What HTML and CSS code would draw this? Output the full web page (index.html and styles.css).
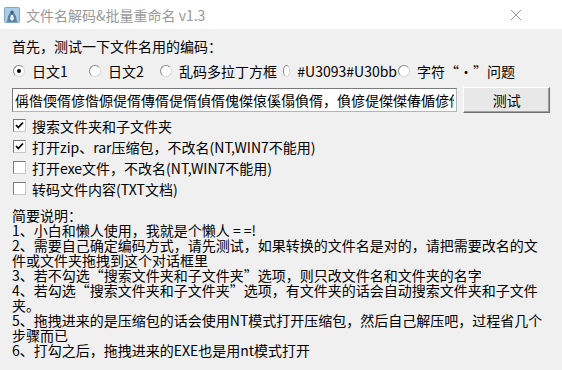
FILE: index.html
```html
<!DOCTYPE html>
<html lang="zh-CN">

<head>
    <meta charset="UTF-8">
    <meta name="viewport" content="width=device-width, initial-scale=1.0">
    <title>文件名解码&amp;批量重命名 v1.3</title>
    <link rel="stylesheet" href="styles.css">
</head>

<body>
    <div class="titlebar">
        <svg class="app-icon" viewBox="0 0 16 16">
            <rect x="0.5" y="0.5" width="15" height="15" rx="1" fill="#a9cde6" stroke="#7ea7c6"/>
            <path d="M3 15 L4 9 L6 6 L8 4 L10 6 L12 9 L13 15 Z" fill="#5f7f9c"/>
            <path d="M7 8 L9 8 L10 12 L8 14 L6 12 Z" fill="#e8f2fa"/>
            <circle cx="8" cy="5" r="1.6" fill="#40566c"/>
        </svg>
        <span class="title">文件名解码&amp;批量重命名 v1.3</span>
        <svg class="close" viewBox="0 0 14 14">
            <path d="M1 1 L13 13 M13 1 L1 13" stroke="#8a8a8a" stroke-width="1"/>
        </svg>
    </div>

    <div class="content">
        <div class="prompt">首先，测试一下文件名用的编码：</div>

        <div class="radios">
            <label class="radio"><span class="dot checked"></span>日文1</label>
            <label class="radio"><span class="dot"></span>日文2</label>
            <label class="radio"><span class="dot"></span>乱码多拉丁方框</label>
            <label class="radio"><span class="dot"></span>#U3093#U30bb</label>
            <label class="radio"><span class="dot"></span>字符“・”问题</label>
        </div>

        <div class="test-row">
            <input class="test-input" type="text" readonly
                value="偁偺偄偦偐偺傆偍偦傳偦偍偦偵偦傀傑偯傒傝偩偦，偩偐偍傑傑偆偱偐偦偐偍">
            <button class="test-btn">测试</button>
        </div>

        <div class="checks">
            <label class="check"><span class="box"><svg viewBox="0 0 11 11"><path d="M2 5 L4.3 7.5 L9 2.5" fill="none" stroke="#000" stroke-width="1.8"/></svg></span>搜索文件夹和子文件夹</label>
            <label class="check"><span class="box"><svg viewBox="0 0 11 11"><path d="M2 5 L4.3 7.5 L9 2.5" fill="none" stroke="#000" stroke-width="1.8"/></svg></span>打开zip、rar压缩包，不改名(NT,WIN7不能用)</label>
            <label class="check"><span class="box"></span>打开exe文件，不改名(NT,WIN7不能用)</label>
            <label class="check"><span class="box"></span>转码文件内容(TXT文档)</label>
        </div>

        <div class="notes">
            <p>简要说明：</p>
            <p>1、小白和懒人使用，我就是个懒人 = =!</p>
            <p>2、需要自己确定编码方式，请先测试，如果转换的文件名是对的，请把需要改名的文件或文件夹拖拽到这个对话框里</p>
            <p>3、若不勾选“搜索文件夹和子文件夹”选项，则只改文件名和文件夹的名字</p>
            <p>4、若勾选“搜索文件夹和子文件夹”选项，有文件夹的话会自动搜索文件夹和子文件夹。</p>
            <p>5、拖拽进来的是压缩包的话会使用NT模式打开压缩包，然后自己解压吧，过程省几个步骤而已</p>
            <p>6、打勾之后，拖拽进来的EXE也是用nt模式打开</p>
        </div>
    </div>
</body>

</html>
```

FILE: styles.css
```css
body {
    margin: 0;
    background-color: #f0f0f0;
    font-family: "Noto Sans CJK SC", sans-serif;
    font-size: 14px;
    color: #000;
}

.titlebar {
    height: 29px;
    background-color: #fff;
    display: flex;
    align-items: center;
    padding: 0 40px 0 4px;
    color: #999;
}

.app-icon {
    width: 16px;
    height: 16px;
    margin-right: 6px;
}

.title {
    flex: 1;
}

.close {
    width: 12px;
    height: 12px;
}

.content {
    padding: 0 12px;
}

.prompt {
    margin-top: 9px;
    line-height: 16px;
}

.radios {
    display: grid;
    grid-template-columns: 76px 71px 123px 115px auto;
    margin-top: 9px;
    line-height: 16px;
}

.radio {
    display: flex;
    align-items: center;
}

.dot {
    width: 12px;
    height: 12px;
    box-sizing: border-box;
    border-radius: 50%;
    border: 1px solid;
    border-color: #8a8a8a #d8d8d8 #d8d8d8 #8a8a8a;
    background-color: #fff;
    margin: 0 7px 0 1px;
    display: flex;
    align-items: center;
    justify-content: center;
}

.dot.checked::after {
    content: "";
    width: 4px;
    height: 4px;
    border-radius: 50%;
    background-color: #000;
}

.test-row {
    display: flex;
    align-items: center;
    gap: 6px;
    margin-top: 8px;
}

.test-input {
    width: 448px;
    height: 24px;
    box-sizing: border-box;
    margin: 0;
    padding: 0 2px;
    border: 1px solid;
    border-color: #7a7a7a #b4b4b4 #b4b4b4 #7a7a7a;
    background-color: #fff;
    font-family: inherit;
    font-size: 14px;
    color: #000;
    outline: none;
}

.test-btn {
    width: 87px;
    height: 26px;
    padding: 0;
    border: 1px solid;
    border-color: #fff #6e6e6e #6e6e6e #fff;
    box-shadow: inset -1px -1px 0 #a0a0a0;
    background-color: #e8e8e8;
    font-family: inherit;
    font-size: 14px;
    color: #000;
}

.checks {
    margin-top: 2px;
}

.check {
    height: 21px;
    display: flex;
    align-items: center;
}

.box {
    width: 13px;
    height: 13px;
    box-sizing: border-box;
    border: 1px solid;
    border-color: #7a7a7a #c8c8c8 #c8c8c8 #7a7a7a;
    background-color: #fff;
    margin: 0 6px 0 1px;
    display: flex;
}

.box svg {
    width: 11px;
    height: 11px;
}

.notes {
    margin-top: 9px;
    width: 532px;
    line-height: 15px;
}

.notes p {
    margin: 0;
}
```
